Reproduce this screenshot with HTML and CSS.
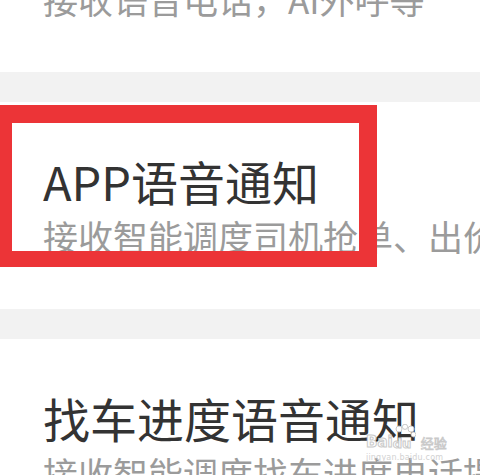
FILE: index.html
```html
<!DOCTYPE html>
<html lang="zh-CN">
<head>
<meta charset="utf-8">
<title>语音通知设置</title>
<link rel="stylesheet" href="styles.css">
</head>
<body>
<div class="page">
  <section class="item">
    <div class="title">电话语音通知</div>
    <div class="desc">接收语音电话，AI外呼等</div>
  </section>
  <div class="band"></div>
  <section class="item">
    <div class="title">APP语音通知</div>
    <div class="desc">接收智能调度司机抢单、出价等语音通知</div>
  </section>
  <div class="band"></div>
  <section class="item">
    <div class="title">找车进度语音通知</div>
    <div class="desc">接收智能调度找车进度电话提醒</div>
  </section>
</div>
<div class="highlight"></div>
<div class="watermark">
  <div class="wm-row">
    <span class="wm-bai">Bai</span>
    <span class="wm-paw">
      <svg width="22" height="24" viewBox="0 0 22 24">
        <g fill="#fff" stroke="#c9c9c9" stroke-width="1">
          <circle cx="5" cy="5" r="3"/>
          <circle cx="11" cy="2.8" r="2.6"/>
          <circle cx="17" cy="5" r="3"/>
          <circle cx="19.5" cy="10.5" r="2.4"/>
        </g>
      </svg>
      <span class="wm-du">du</span>
    </span>
    <span class="wm-cn">经验</span>
  </div>
  <div class="wm-url">jingyan.baidu.com</div>
</div>
</body>
</html>
```

FILE: styles.css
```css
html, body {
  margin: 0;
  padding: 0;
  background: #ffffff;
  overflow: hidden;
}

body {
  position: relative;
  width: 480px;
  height: 475px;
  font-family: "Noto Sans CJK SC", "Noto Sans", sans-serif;
}

.page {
  margin-top: -135px;
}

.item {
  padding: 51px 0 51px 43px;
  background: #ffffff;
}

.title {
  font-size: 47px;
  line-height: 56px;
  color: #333333;
  white-space: nowrap;
}

.desc {
  margin-top: 5px;
  font-size: 35px;
  line-height: 44px;
  color: #9b9b9b;
  white-space: nowrap;
  overflow: hidden;
}

.band {
  height: 30px;
  background: #f2f2f2;
}

.highlight {
  position: absolute;
  left: -5px;
  top: 105px;
  width: 382px;
  height: 162px;
  box-sizing: border-box;
  border: 17px solid #ec3437;
  border-top-width: 18px;
  border-right-width: 18px;
  border-bottom-width: 16px;
}

.watermark {
  position: absolute;
  left: 366px;
  top: 424px;
  font-family: "DejaVu Sans", sans-serif;
}

.wm-row {
  display: flex;
  align-items: flex-end;
  height: 26px;
}

.wm-bai,
.wm-du {
  font-size: 15px;
  font-weight: bold;
  line-height: 15px;
  color: #ffffff;
  -webkit-text-stroke: 1px #c9c9c9;
}

.wm-paw {
  position: relative;
  display: flex;
  align-items: flex-end;
  width: 26px;
  height: 26px;
}

.wm-paw svg {
  position: absolute;
  left: 1px;
  top: 0;
}

.wm-du {
  position: relative;
  font-size: 13px;
  line-height: 13px;
}

.wm-cn {
  margin-left: 2px;
  font-family: "Noto Sans CJK SC", sans-serif;
  font-size: 13px;
  line-height: 14px;
  color: #ffffff;
  -webkit-text-stroke: 0.8px #c9c9c9;
}

.wm-url {
  margin-top: 3px;
  font-size: 8px;
  line-height: 9px;
  color: #d2d2d2;
  letter-spacing: 0.2px;
}
```
